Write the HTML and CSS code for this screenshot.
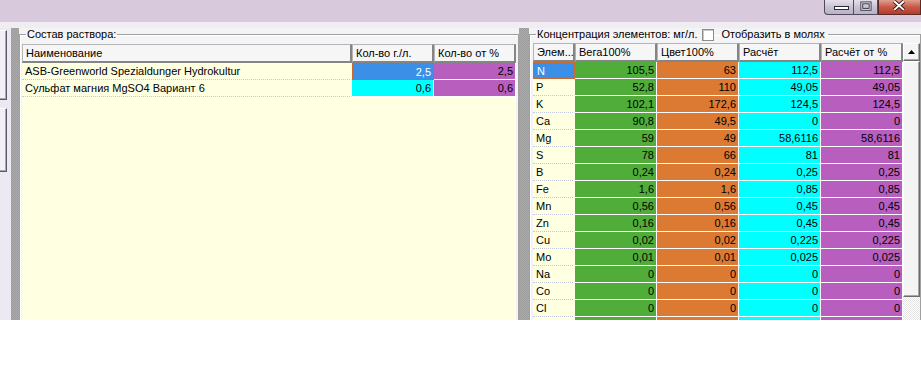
FILE: index.html
```html
<!DOCTYPE html>
<html>
<head>
<meta charset="utf-8">
<title>Состав раствора</title>
<link rel="stylesheet" href="styles.css">
</head>
<body>
<div class="window">
  <div class="titlebar">
    <div class="caption">
      <div class="cbtn min"><svg width="28" height="14" viewBox="0 0 28 14"><rect x="9.5" y="6.5" width="14" height="3" fill="#fff" stroke="#2a2a3a"/></svg></div>
      <div class="cbtn max"><svg width="25" height="14" viewBox="0 0 25 14"><rect x="8.5" y="2.5" width="9" height="7" fill="none" stroke="#2a2a3a" stroke-width="3"/><rect x="8.5" y="2.5" width="9" height="7" fill="none" stroke="#fff" stroke-width="1"/></svg></div>
      <div class="cbtn close"><svg width="43" height="14" viewBox="0 0 43 14"><path d="M16 1 L26 10 M26 1 L16 10" stroke="#3a1a1a" stroke-width="4"/><path d="M16 1 L26 10 M26 1 L16 10" stroke="#fff" stroke-width="2"/></svg></div>
    </div>
  </div>
  <div class="band"></div>
  <div class="client">
    <div class="strip">
      <div class="sbtn b1"></div>
      <div class="sbtn b2"></div>
    </div>
    <div class="splitter s1"></div>
    <fieldset class="group g-left">
      <legend class="legend">Состав раствора:</legend>
      <div class="ltable">
        <div class="hrow">
          <div class="hc w-name">Наименование</div>
          <div class="hc w-82">Кол-во г./л.</div>
          <div class="hc w-82">Кол-во от %</div>
        </div>
        <div class="row">
          <div class="c name w-name">ASB-Greenworld Spezialdunger Hydrokultur</div>
          <div class="c num w-82 blue sel">2,5</div>
          <div class="c num w-82 purple">2,5</div>
        </div>
        <div class="row">
          <div class="c name w-name">Сульфат магния MgSO4 Вариант 6</div>
          <div class="c num w-82 cyan">0,6</div>
          <div class="c num w-82 purple">0,6</div>
        </div>
      </div>
    </fieldset>
    <div class="splitter s2"></div>
    <fieldset class="group g-right">
      <legend class="legend rlegend">
        <span>Концентрация элементов: мг/л.</span>
        <span class="checkbox"></span>
        <span class="cblabel">Отобразить в молях</span>
      </legend>
      <div class="rwrap">
        <div class="rtable">
          <div class="hrow">
            <div class="hc w-el">Элем...</div>
            <div class="hc w-82">Вега100%</div>
            <div class="hc w-82">Цвет100%</div>
            <div class="hc w-82">Расчёт</div>
            <div class="hc w-82">Расчёт от %</div>
          </div>
          <div class="row"><div class="c name w-el blue sel">N</div><div class="c num w-82 green">105,5</div><div class="c num w-82 orange">63</div><div class="c num w-82 cyan">112,5</div><div class="c num w-82 purple">112,5</div></div>
          <div class="row"><div class="c name w-el">P</div><div class="c num w-82 green">52,8</div><div class="c num w-82 orange">110</div><div class="c num w-82 cyan">49,05</div><div class="c num w-82 purple">49,05</div></div>
          <div class="row"><div class="c name w-el">K</div><div class="c num w-82 green">102,1</div><div class="c num w-82 orange">172,6</div><div class="c num w-82 cyan">124,5</div><div class="c num w-82 purple">124,5</div></div>
          <div class="row"><div class="c name w-el">Ca</div><div class="c num w-82 green">90,8</div><div class="c num w-82 orange">49,5</div><div class="c num w-82 cyan">0</div><div class="c num w-82 purple">0</div></div>
          <div class="row"><div class="c name w-el">Mg</div><div class="c num w-82 green">59</div><div class="c num w-82 orange">49</div><div class="c num w-82 cyan">58,6116</div><div class="c num w-82 purple">58,6116</div></div>
          <div class="row"><div class="c name w-el">S</div><div class="c num w-82 green">78</div><div class="c num w-82 orange">66</div><div class="c num w-82 cyan">81</div><div class="c num w-82 purple">81</div></div>
          <div class="row"><div class="c name w-el">B</div><div class="c num w-82 green">0,24</div><div class="c num w-82 orange">0,24</div><div class="c num w-82 cyan">0,25</div><div class="c num w-82 purple">0,25</div></div>
          <div class="row"><div class="c name w-el">Fe</div><div class="c num w-82 green">1,6</div><div class="c num w-82 orange">1,6</div><div class="c num w-82 cyan">0,85</div><div class="c num w-82 purple">0,85</div></div>
          <div class="row"><div class="c name w-el">Mn</div><div class="c num w-82 green">0,56</div><div class="c num w-82 orange">0,56</div><div class="c num w-82 cyan">0,45</div><div class="c num w-82 purple">0,45</div></div>
          <div class="row"><div class="c name w-el">Zn</div><div class="c num w-82 green">0,16</div><div class="c num w-82 orange">0,16</div><div class="c num w-82 cyan">0,45</div><div class="c num w-82 purple">0,45</div></div>
          <div class="row"><div class="c name w-el">Cu</div><div class="c num w-82 green">0,02</div><div class="c num w-82 orange">0,02</div><div class="c num w-82 cyan">0,225</div><div class="c num w-82 purple">0,225</div></div>
          <div class="row"><div class="c name w-el">Mo</div><div class="c num w-82 green">0,01</div><div class="c num w-82 orange">0,01</div><div class="c num w-82 cyan">0,025</div><div class="c num w-82 purple">0,025</div></div>
          <div class="row"><div class="c name w-el">Na</div><div class="c num w-82 green">0</div><div class="c num w-82 orange">0</div><div class="c num w-82 cyan">0</div><div class="c num w-82 purple">0</div></div>
          <div class="row"><div class="c name w-el">Co</div><div class="c num w-82 green">0</div><div class="c num w-82 orange">0</div><div class="c num w-82 cyan">0</div><div class="c num w-82 purple">0</div></div>
          <div class="row"><div class="c name w-el">Cl</div><div class="c num w-82 green">0</div><div class="c num w-82 orange">0</div><div class="c num w-82 cyan">0</div><div class="c num w-82 purple">0</div></div>
          <div class="row"><div class="c name w-el"></div><div class="c num w-82 green"></div><div class="c num w-82 orange"></div><div class="c num w-82 cyan"></div><div class="c num w-82 purple"></div></div>
        </div>
        <div class="vscroll">
          <div class="sb-up"><svg width="7" height="4" viewBox="0 0 7 4"><path d="M0 4 L3.5 0 L7 4 Z" fill="#000"/></svg></div>
          <div class="sb-thumb"></div>
          <div class="sb-track"></div>
        </div>
      </div>
    </fieldset>
  </div>
</div>
</body>
</html>
```

FILE: styles.css
```css
* { box-sizing: border-box; }
html, body { margin: 0; padding: 0; background: #ffffff; }
body {
  font-family: "Liberation Sans", Arial, sans-serif;
  font-size: 11px;
  color: #000;
  width: 921px;
  height: 369px;
  overflow: hidden;
}
.window { width: 921px; }

/* title bar */
.titlebar {
  height: 22px;
  background: #d8c9dc;
  display: flex;
  justify-content: flex-end;
}
.caption { display: flex; height: 15px; }
.cbtn {
  height: 15px;
  border: 1px solid #4e4a5c;
  border-top: none;
  display: flex;
  background: linear-gradient(#e6dfea, #c7bfd2 55%, #b9b1c6);
}
.cbtn svg { display: block; }
.cbtn.min { width: 29px; border-radius: 0 0 0 4px; border-right: none; }
.cbtn.max { width: 25px; }
.cbtn.close {
  width: 43px;
  background: linear-gradient(#e0a090, #c95a48 50%, #b53a2a);
  border-color: #5a2a26;
}

.band { height: 6px; background: #efedf2; }

/* client area */
.client {
  height: 292px;
  display: flex;
  overflow: hidden;
  background: #f3f2f5;
}
.strip {
  width: 11px;
  background: #ece9f2;
  display: flex;
  flex-direction: column;
  padding-top: 2px;
  gap: 8px;
}
.sbtn {
  width: 7px;
  background: #f2f0f6;
  border-top: 1px solid #ffffff;
  border-right: 1px solid #5c5c66;
  border-bottom: 1px solid #5c5c66;
  box-shadow: inset -1px -1px 0 #a6a6b0;
}
.sbtn.b1 { height: 70px; }
.sbtn.b2 { height: 64px; }

.splitter {
  background-color: #a4a4a4;
  background-image: repeating-conic-gradient(#9b9b9b 0 25%, #acacac 0 50%);
  background-size: 2px 2px;
}
.s1 { width: 8px; }
.s2 { width: 10px; }

/* group boxes */
.group {
  margin: 0;
  min-width: 0;
  height: 300px;
  border: 1px solid #a0a0a0;
  box-shadow: inset 1px 1px 0 #ffffff;
  display: flex;
  flex-direction: column;
  background: #f4f3f5;
}
.legend {
  margin-left: 4px;
  padding: 0 1px;
  height: 13px;
  line-height: 13px;
  color: #000;
}
.g-left { width: 500px; padding: 0 2px 0 2px; }
.g-right { width: 392px; padding: 0 0 0 3px; }
.rlegend { display: flex; align-items: center; margin-left: 3px; }
.checkbox {
  width: 12px;
  height: 12px;
  margin-left: 5px;
  background: #fff;
  border: 1px solid #8c8c8c;
  box-shadow: inset 1px 1px 0 #c8c8c8;
}
.cblabel { margin-left: 7px; padding-right: 2px; }

/* tables */
.ltable {
  margin-top: 3px;
  width: 494px;
  flex: 1;
  background: #ffffe1;
}
.rwrap {
  margin-top: 2px;
  display: flex;
  flex: 1;
  overflow: hidden;
}
.rtable {
  width: 370px;
  background: #ffffe1;
  overflow: hidden;
}
.hrow {
  display: flex;
  height: 19px;
  background: #f6f6f6;
}
.hc {
  height: 19px;
  line-height: 16px;
  padding-left: 3px;
  background: #f6f6f6;
  border-top: 1px solid #b4b4b4;
  border-left: 1px solid #b4b4b4;
  border-right: 2px solid #858585;
  border-bottom: 2px solid #858585;
  white-space: nowrap;
  overflow: hidden;
}
.row { display: flex; height: 17px; }
.c {
  height: 17px;
  line-height: 16px;
  white-space: nowrap;
  overflow: hidden;
  border-right: 1px solid #ffffff;
  border-bottom: 1px solid #ffffff;
}
.c.name {
  padding-left: 3px;
  border-right-color: #ffffe1;
  border-bottom: 1px dotted #c4c8dc;
}
.c.num { text-align: right; padding-right: 2px; }
.w-name { width: 330px; }
.w-82 { width: 82px; }
.w-el { width: 42px; }

.green  { background: #50ad39; }
.orange { background: #dc7a33; }
.cyan   { background: #00ffff; }
.purple { background: #b75ebf; }
.blue   { background: #3b8fe6; color: #fff; }
.c.sel { border: 1px solid #c8692e; }
.c.name.sel { border: 1px solid #c8692e; }

/* scrollbar */
.vscroll {
  width: 17px;
  display: flex;
  flex-direction: column;
  background-color: #f6f6f6;
  background-image: repeating-conic-gradient(#ffffff 0 25%, #e4e4e4 0 50%);
  background-size: 2px 2px;
}
.sb-up {
  height: 18px;
  display: flex;
  align-items: center;
  justify-content: center;
  background: #f4f4f4;
  border-top: 1px solid #fff;
  border-left: 1px solid #fff;
  border-right: 1px solid #6a6a6a;
  border-bottom: 1px solid #6a6a6a;
  box-shadow: inset -1px -1px 0 #a8a8a8;
}
.sb-thumb {
  height: 236px;
  background: #f4f4f4;
  border-top: 1px solid #fff;
  border-left: 1px solid #fff;
  border-right: 1px solid #6a6a6a;
  border-bottom: 1px solid #6a6a6a;
  box-shadow: inset -1px -1px 0 #a8a8a8;
}
.sb-track { flex: 1; }
```
